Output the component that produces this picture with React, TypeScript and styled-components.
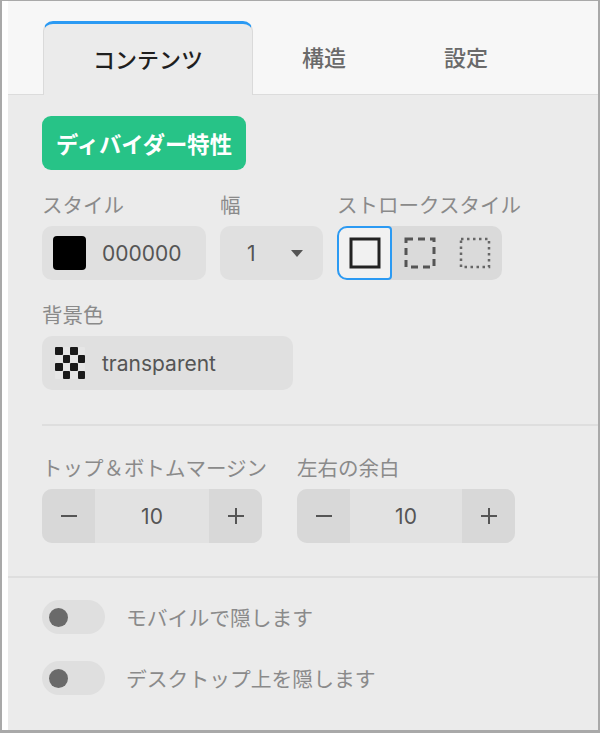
import React from "react";
import styled, { createGlobalStyle } from "styled-components";

const Global = createGlobalStyle`
  html, body { margin: 0; padding: 0; background: #ffffff; }
  body { font-family: "Inter", "Noto Sans CJK JP", sans-serif; }
  * { box-sizing: border-box; }
`;

const Frame = styled.div`
  width: 600px;
  height: 733px;
  border-style: solid;
  border-color: #a9a9a9;
  border-width: 1px 2px 3px 2px;
  padding-left: 6px;
  background: #ffffff;
  display: flex;
`;

const Panel = styled.div`
  flex: 1;
  background: #ebebeb;
  display: flex;
  flex-direction: column;
  overflow: hidden;
`;

const Header = styled.div`
  height: 94px;
  background: #f7f7f7;
  border-bottom: 1px solid #dcdcdc;
  display: flex;
  align-items: flex-end;
  padding-left: 35px;
`;

const Tab = styled.div<{ $active?: boolean }>`
  height: ${(p) => (p.$active ? "74px" : "72px")};
  padding: 0 49px 4px;
  display: flex;
  align-items: center;
  font-family: "Noto Sans CJK JP", sans-serif;
  font-size: 22px;
  font-weight: 500;
  color: ${(p) => (p.$active ? "#1f1f1f" : "#6a6a6a")};
  margin-bottom: ${(p) => (p.$active ? "-1px" : "0")};
  background: ${(p) => (p.$active ? "#ebebeb" : "transparent")};
  border-top: ${(p) => (p.$active ? "3px solid #2b9af3" : "none")};
  border-left: ${(p) => (p.$active ? "1px solid #dadada" : "none")};
  border-right: ${(p) => (p.$active ? "1px solid #dadada" : "none")};
  border-radius: 10px 10px 0 0;
`;

const Section = styled.div`
  padding: 21px 0 0 34px;
  display: flex;
  flex-direction: column;
`;

const Badge = styled.div`
  align-self: flex-start;
  height: 54px;
  padding: 0 14px;
  border-radius: 9px;
  background: #27c387;
  color: #ffffff;
  font-family: "Noto Sans CJK JP", sans-serif;
  font-size: 22.3px;
  font-weight: 700;
  display: flex;
  align-items: center;
`;

const FieldRow = styled.div<{ $mt: number }>`
  display: flex;
  gap: 14px;
  margin-top: ${(p) => p.$mt}px;
`;

const Field = styled.div`
  display: flex;
  flex-direction: column;
  gap: 9px;
`;

const Label = styled.div`
  font-family: "Noto Sans CJK JP", sans-serif;
  font-size: 20.5px;
  line-height: 25px;
  color: #8a8a8a;
  white-space: nowrap;
`;

const Box = styled.div<{ $w: number }>`
  width: ${(p) => p.$w}px;
  height: 54px;
  border-radius: 10px;
  background: #e0e0e0;
  display: flex;
  align-items: center;
  padding-left: 11px;
  gap: 16px;
  font-size: 21px;
  color: #555555;
`;

const Swatch = styled.div`
  width: 33px;
  height: 34px;
  border-radius: 4px;
  background: #000000;
`;

const Select = styled.div`
  width: 103px;
  height: 54px;
  border-radius: 10px;
  background: #e0e0e0;
  display: flex;
  align-items: center;
  justify-content: space-between;
  padding: 0 20px 0 27px;
  font-size: 21px;
  color: #555555;
`;

const Caret = styled.div`
  width: 0;
  height: 0;
  border-left: 6px solid transparent;
  border-right: 6px solid transparent;
  border-top: 7px solid #555555;
`;

const StrokeGroup = styled.div`
  width: 165px;
  height: 54px;
  border-radius: 10px;
  background: #dadada;
  display: flex;
`;

const StrokeBtn = styled.div<{ $active?: boolean }>`
  width: 55px;
  height: 54px;
  display: flex;
  align-items: center;
  justify-content: center;
  background: ${(p) => (p.$active ? "#f1f1f1" : "transparent")};
  border: ${(p) => (p.$active ? "2px solid #2b9af3" : "none")};
  border-radius: 10px 4px 4px 10px;
`;

const Checker = styled.div`
  width: 30px;
  height: 32px;
  margin-left: 2px;
  margin-right: 1px;
  display: grid;
  grid-template-columns: repeat(4, 1fr);
  grid-template-rows: repeat(4, 1fr);
`;

const Cell = styled.div<{ $dark: boolean }>`
  background: ${(p) => (p.$dark ? "#1a1a1a" : "#e6e6e6")};
  border-radius: 1px;
`;

const Divider = styled.div<{ $mt: number }>`
  height: 2px;
  background: #dedede;
  margin-top: ${(p) => p.$mt}px;
`;

const StepperGrid = styled.div`
  display: grid;
  grid-template-columns: 220px 218px;
  column-gap: 35px;
  margin-top: 29px;
`;

const Stepper = styled.div`
  height: 54px;
  border-radius: 10px;
  overflow: hidden;
  background: #e2e2e2;
  display: flex;
  font-size: 21px;
  color: #555555;
`;

const StepBtn = styled.div`
  width: 53px;
  display: flex;
  align-items: center;
  justify-content: center;
  background: #d8d8d8;
`;

const StepValue = styled.div`
  flex: 1;
  display: flex;
  align-items: center;
  justify-content: center;
`;

const ToggleSection = styled.div`
  padding: 22px 0 0 34px;
  display: flex;
  flex-direction: column;
  gap: 27px;
`;

const ToggleRow = styled.div`
  display: flex;
  align-items: center;
  gap: 21px;
`;

const Toggle = styled.div`
  width: 63px;
  height: 34px;
  border-radius: 17px;
  background: #dfdfdf;
  display: flex;
  align-items: center;
  padding-left: 7px;
`;

const Knob = styled.div`
  width: 19px;
  height: 19px;
  border-radius: 50%;
  background: #6a6a6a;
`;

const ToggleText = styled.div`
  font-family: "Noto Sans CJK JP", sans-serif;
  font-size: 20.8px;
  color: #8a8a8a;
`;

const Minus = () => (
  <svg width="20" height="20" viewBox="0 0 20 20">
    <line x1="2" y1="10" x2="18" y2="10" stroke="#555" strokeWidth="2" />
  </svg>
);
const Plus = () => (
  <svg width="20" height="20" viewBox="0 0 20 20">
    <line x1="2" y1="10" x2="18" y2="10" stroke="#555" strokeWidth="2" />
    <line x1="10" y1="2" x2="10" y2="18" stroke="#555" strokeWidth="2" />
  </svg>
);

const SquareIcon = ({ dash, color, w }: { dash?: string; color: string; w: number }) => (
  <svg width="32" height="32" viewBox="0 0 32 32">
    <rect x="2" y="2" width="28" height="28" fill="none" stroke={color} strokeWidth={w} strokeDasharray={dash} />
  </svg>
);

const checker = [
  [1, 0, 1, 0],
  [0, 1, 0, 1],
  [1, 0, 1, 0],
  [0, 1, 0, 1],
];

export default function App() {
  return (
    <>
      <Global />
      <Frame>
        <Panel>
          <Header>
            <Tab $active>コンテンツ</Tab>
            <Tab>構造</Tab>
            <Tab>設定</Tab>
          </Header>
          <Section>
            <Badge>ディバイダー特性</Badge>
            <FieldRow $mt={22}>
              <Field>
                <Label>スタイル</Label>
                <Box $w={164}>
                  <Swatch />
                  000000
                </Box>
              </Field>
              <Field>
                <Label>幅</Label>
                <Select>
                  1
                  <Caret />
                </Select>
              </Field>
              <Field>
                <Label>ストロークスタイル</Label>
                <StrokeGroup>
                  <StrokeBtn $active>
                    <SquareIcon color="#222" w={3} />
                  </StrokeBtn>
                  <StrokeBtn>
                    <SquareIcon color="#555" w={3} dash="7 5" />
                  </StrokeBtn>
                  <StrokeBtn>
                    <SquareIcon color="#666" w={2.5} dash="2.5 3.5" />
                  </StrokeBtn>
                </StrokeGroup>
              </Field>
            </FieldRow>
            <FieldRow $mt={22}>
              <Field>
                <Label>背景色</Label>
                <Box $w={251}>
                  <Checker>
                    {checker.flat().map((d, i) => (
                      <Cell key={i} $dark={d === 1} />
                    ))}
                  </Checker>
                  transparent
                </Box>
              </Field>
            </FieldRow>
            <Divider $mt={34} />
            <StepperGrid>
              <Field>
                <Label>トップ＆ボトムマージン</Label>
                <Stepper>
                  <StepBtn><Minus /></StepBtn>
                  <StepValue>10</StepValue>
                  <StepBtn><Plus /></StepBtn>
                </Stepper>
              </Field>
              <Field>
                <Label>左右の余白</Label>
                <Stepper>
                  <StepBtn><Minus /></StepBtn>
                  <StepValue>10</StepValue>
                  <StepBtn><Plus /></StepBtn>
                </Stepper>
              </Field>
            </StepperGrid>
          </Section>
          <Divider $mt={33} />
          <ToggleSection>
            <ToggleRow>
              <Toggle><Knob /></Toggle>
              <ToggleText>モバイルで隠します</ToggleText>
            </ToggleRow>
            <ToggleRow>
              <Toggle><Knob /></Toggle>
              <ToggleText>デスクトップ上を隠します</ToggleText>
            </ToggleRow>
          </ToggleSection>
        </Panel>
      </Frame>
    </>
  );
}
